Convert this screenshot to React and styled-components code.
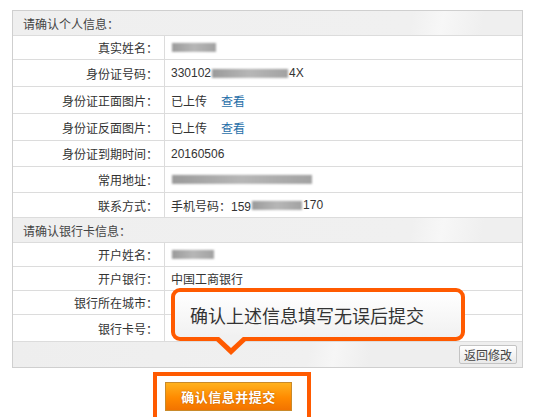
import React from "react";
import styled, { createGlobalStyle } from "styled-components";

const GlobalStyle = createGlobalStyle`
  html, body {
    margin: 0;
    padding: 0;
    background: #fff;
  }
  body {
    font-family: "Liberation Sans", "Noto Sans CJK SC", sans-serif;
    font-size: 12px;
    color: #333;
  }
`;

const personal = [
  { label: "真实姓名：", value: [{ blur: 44 }] },
  { label: "身份证号码：", value: ["330102", { blur: 76 }, "4X"] },
  { label: "身份证正面图片：", value: ["已上传"], link: "查看" },
  { label: "身份证反面图片：", value: ["已上传"], link: "查看" },
  { label: "身份证到期时间：", value: ["20160506"] },
  { label: "常用地址：", value: [{ blur: 140 }] },
  { label: "联系方式：", value: ["手机号码：159", { blur: 50 }, "170"] }
];

const bank = [
  { label: "开户姓名：", value: [{ blur: 42 }] },
  { label: "开户银行：", value: ["中国工商银行"] },
  { label: "银行所在城市：", value: [] },
  { label: "银行卡号：", value: [] }
];

const Page = styled.div`
  padding: 10px 15px 0 12px;
  position: relative;
`;

const Table = styled.div`
  width: 509px;
  border: 1px solid #cfcfcf;
  display: flex;
  flex-direction: column;
`;

const SectionHead = styled.div`
  height: 24px;
  display: flex;
  align-items: center;
  padding-left: 10px;
  color: #444;
  border-bottom: 1px solid #dcdcdc;
  background: linear-gradient(100deg, #efefef 0%, #f0f0f0 78%, #f7f7f7 84%, #efefef 92%);
`;

const Row = styled.div`
  height: ${(p) => p.$h}px;
  display: grid;
  grid-template-columns: 152px 1fr;
  border-bottom: 1px solid #dcdcdc;
  box-sizing: border-box;
`;

const Label = styled.div`
  border-right: 1px solid #dcdcdc;
  display: flex;
  align-items: center;
  justify-content: flex-end;
  padding-right: 6px;
  color: #333;
`;

const Value = styled.div`
  display: flex;
  align-items: center;
  padding-left: 6px;
  color: #333;
`;

const Blurred = styled.span`
  display: inline-block;
  height: 9px;
  background: repeating-linear-gradient(
      #c9c9c9 0px,
      #c9c9c9 2px,
      #e6e6e6 2px,
      #e6e6e6 3px
    ),
    linear-gradient(90deg, #bbb, #ddd 50%, #c4c4c4);
  background-blend-mode: multiply;
  filter: blur(0.9px);
  margin: 0 1px;
`;

const Link = styled.a`
  color: #1f6ea8;
  margin-left: 14px;
  text-decoration: none;
  cursor: pointer;
`;

const Footer = styled.div`
  height: 25px;
  display: flex;
  align-items: center;
  justify-content: flex-end;
  padding-right: 5px;
  background: linear-gradient(100deg, #eeeeee 0%, #f0f0f0 58%, #f6f6f6 63%, #eeeeee 70%);
`;

const BackButton = styled.button`
  height: 19px;
  width: 58px;
  padding: 0;
  font: inherit;
  font-size: 12px;
  color: #444;
  border: 1px solid #c3c3c3;
  border-radius: 2px;
  background: linear-gradient(#ffffff, #e9e9e9);
  cursor: pointer;
`;

const Bubble = styled.div`
  position: absolute;
  left: 171px;
  top: 288px;
  width: 271px;
  height: 45px;
  border: 4px solid #ff5a00;
  border-radius: 9px;
  background: linear-gradient(#ffffff, #f1f1f1);
  display: flex;
  align-items: center;
  padding-left: 15px;
  font-family: "Noto Sans CJK SC", sans-serif;
  font-size: 18px;
  color: #333;

  &::after {
    content: "";
    position: absolute;
    left: 37px;
    bottom: -18px;
    border-left: 19px solid transparent;
    border-right: 19px solid transparent;
    border-top: 18px solid #ff5a00;
  }
  &::before {
    content: "";
    position: absolute;
    left: 42px;
    bottom: -11px;
    border-left: 14px solid transparent;
    border-right: 14px solid transparent;
    border-top: 13px solid #f1f1f1;
    z-index: 1;
  }
`;

const SubmitArea = styled.div`
  margin: 4px 0 0 141px;
  width: 142px;
  height: 50px;
  border: 4px solid #ff5a00;
  border-bottom: none;
  padding: 6px 0 0 8px;
`;

const SubmitButton = styled.button`
  width: 127px;
  height: 29px;
  padding: 0;
  border: 1px solid #c98a2a;
  background: linear-gradient(#ffb21f, #ff8a00 55%, #f27300);
  color: #fff;
  font-family: "Noto Sans CJK SC", sans-serif;
  font-weight: bold;
  font-size: 13px;
  letter-spacing: 0.5px;
  text-shadow: 0 0 2px #b85a00;
  cursor: pointer;
`;

const renderValue = (parts) =>
  parts.map((p, i) =>
    typeof p === "string" ? <span key={i}>{p}</span> : <Blurred key={i} style={{ width: p.blur }} />
  );

const InfoRow = ({ item, h }) => (
  <Row $h={h}>
    <Label>{item.label}</Label>
    <Value>
      {renderValue(item.value)}
      {item.link && <Link>{item.link}</Link>}
    </Value>
  </Row>
);

export default function App() {
  const personalHeights = [24, 27, 27, 27, 26, 26, 25];
  const bankHeights = [24, 24, 24, 27];
  return (
    <>
      <GlobalStyle />
      <Page>
        <Table>
          <SectionHead>请确认个人信息：</SectionHead>
          {personal.map((item, i) => (
            <InfoRow key={item.label} item={item} h={personalHeights[i]} />
          ))}
          <SectionHead>请确认银行卡信息：</SectionHead>
          {bank.map((item, i) => (
            <InfoRow key={item.label} item={item} h={bankHeights[i]} />
          ))}
          <Footer>
            <BackButton>返回修改</BackButton>
          </Footer>
        </Table>
        <Bubble>确认上述信息填写无误后提交</Bubble>
        <SubmitArea>
          <SubmitButton>确认信息并提交</SubmitButton>
        </SubmitArea>
      </Page>
    </>
  );
}
